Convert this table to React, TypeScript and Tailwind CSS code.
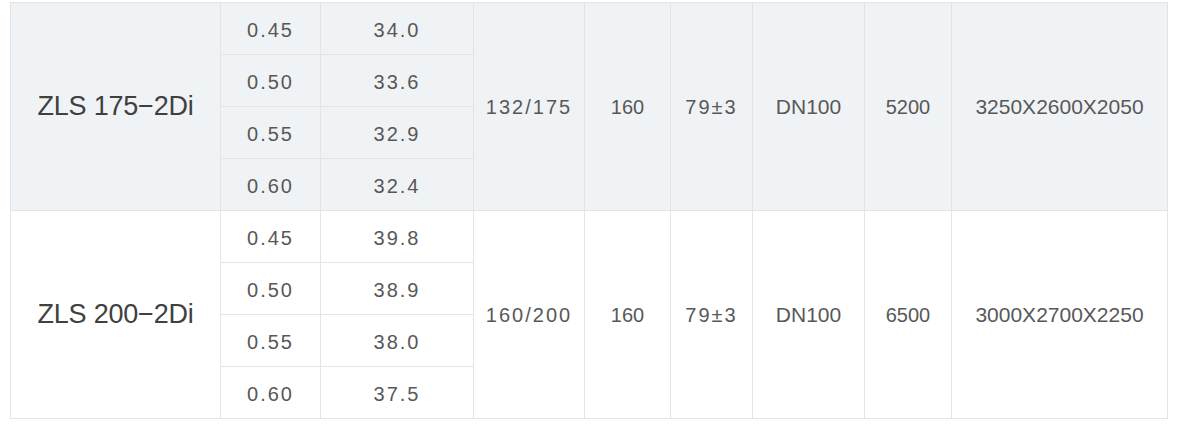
const groups = [
  {
    model: "ZLS 175−2Di",
    rows: [
      ["0.45", "34.0"],
      ["0.50", "33.6"],
      ["0.55", "32.9"],
      ["0.60", "32.4"],
    ],
    power: "132/175",
    speed: "160",
    noise: "79±3",
    pipe: "DN100",
    weight: "5200",
    size: "3250X2600X2050",
    shaded: true,
  },
  {
    model: "ZLS 200−2Di",
    rows: [
      ["0.45", "39.8"],
      ["0.50", "38.9"],
      ["0.55", "38.0"],
      ["0.60", "37.5"],
    ],
    power: "160/200",
    speed: "160",
    noise: "79±3",
    pipe: "DN100",
    weight: "6500",
    size: "3000X2700X2250",
    shaded: false,
  },
];

const cell = "border border-[#e2e4e6] text-center align-middle text-[#585858]";
const spaced = "text-[20px] tracking-[2px]";

export default function App() {
  return (
    <div className="bg-white w-[1178px] h-[429px] pt-[2px] pl-[10px]" style={{ fontFamily: '"Liberation Sans", Arial, sans-serif' }}>
      <table className="table-fixed border-collapse w-[1157px]">
        <colgroup>
          <col className="w-[210px]" />
          <col className="w-[100px]" />
          <col className="w-[153px]" />
          <col className="w-[111px]" />
          <col className="w-[86px]" />
          <col className="w-[82px]" />
          <col className="w-[112px]" />
          <col className="w-[87px]" />
          <col className="w-[216px]" />
        </colgroup>
        <tbody>
          {groups.map((g) =>
            g.rows.map((r, i) => (
              <tr key={g.model + i} className={g.shaded ? "bg-[#f0f3f5]" : "bg-white"}>
                {i === 0 && (
                  <td rowSpan={4} className={`${cell} text-[27px] tracking-[-0.2px] !text-[#404040]`}>
                    {g.model}
                  </td>
                )}
                <td className={`${cell} ${spaced} h-[52px] pt-[3px]`}>{r[0]}</td>
                <td className={`${cell} ${spaced} pt-[3px]`}>{r[1]}</td>
                {i === 0 && (
                  <>
                    <td rowSpan={4} className={`${cell} ${spaced}`}>{g.power}</td>
                    <td rowSpan={4} className={`${cell} text-[20px]`}>{g.speed}</td>
                    <td rowSpan={4} className={`${cell} ${spaced}`}>{g.noise}</td>
                    <td rowSpan={4} className={`${cell} text-[21px]`}>{g.pipe}</td>
                    <td rowSpan={4} className={`${cell} text-[20px]`}>{g.weight}</td>
                    <td rowSpan={4} className={`${cell} text-[21px]`}>{g.size}</td>
                  </>
                )}
              </tr>
            ))
          )}
        </tbody>
      </table>
    </div>
  );
}
